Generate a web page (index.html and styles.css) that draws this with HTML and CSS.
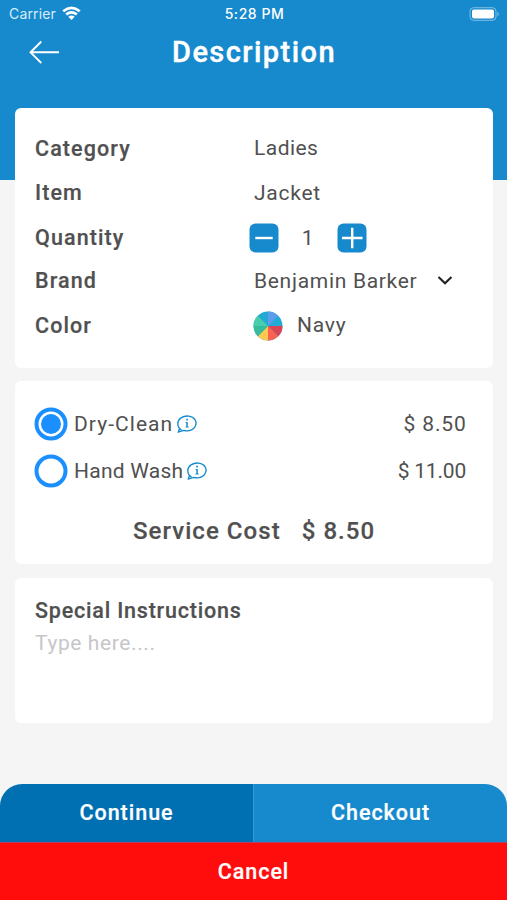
FILE: index.html
```html
<!DOCTYPE html>
<html lang="en">
<head>
<meta charset="utf-8">
<title>Description</title>
<link rel="stylesheet" href="styles.css">
</head>
<body>
<main class="screen">
  <header class="status">
    <div class="carrier"><span>Carrier</span>
      <svg width="19" height="14" viewBox="0 0 19 14"><g fill="none" stroke="#fff" stroke-width="2.7"><path d="M1.2 5.2Q9.5-1.5 17.8 5.2"/><path d="M4.2 8.5Q9.5 4.2 14.8 8.5"/></g><path d="M6.3 10.8Q9.5 8.3 12.7 10.8L9.5 14Z" fill="#fff"/></svg>
    </div>
    <time>5:28 PM</time>
    <svg class="battery" width="31" height="14" viewBox="0 0 31 14"><rect x="1" y=".7" width="26" height="12.6" rx="3.5" fill="none" stroke="#fff" stroke-opacity=".45"/><rect x="3" y="2.6" width="22" height="8.8" rx="1.8" fill="#fff"/><path d="M28.5 4.7Q31 7 28.5 9.3Z" fill="#fff" opacity=".5"/></svg>
  </header>
  <nav class="nav">
    <svg class="back" width="32" height="24" viewBox="0 0 32 24" fill="none" stroke="#fff" stroke-width="1.9"><path d="M30 12.3H1.5M12.3 1.5 1.5 12.3 12.3 23"/></svg>
    <h1>Description</h1>
  </nav>
  <section class="card details">
    <div class="row"><b class="category">Category</b><span class="ladies">Ladies</span></div>
    <div class="row"><b class="item">Item</b><span class="jacket">Jacket</span></div>
    <div class="row quantity-row"><b class="quantity">Quantity</b>
      <div class="stepper">
        <svg width="30" height="30" viewBox="0 0 30 30"><rect x=".5" y=".5" width="29" height="29" rx="6" fill="#178acd"/><path d="M6.3 15H23.7" stroke="#fff" stroke-width="2.4"/></svg>
        <span class="count">1</span>
        <svg width="30" height="30" viewBox="0 0 30 30"><rect x=".5" y=".5" width="29" height="29" rx="6" fill="#178acd"/><path d="M5 15H25.5M15.2 4.7V25.3" stroke="#fff" stroke-width="2.4"/></svg>
      </div>
    </div>
    <div class="row brand-row"><b class="brand">Brand</b><span class="barker">Benjamin Barker</span>
      <svg class="chevron" width="16" height="11" viewBox="0 0 16 11" fill="none" stroke="#222" stroke-width="2.1"><path d="m1.5 2 6.5 6.3L14.5 2"/></svg>
    </div>
    <div class="row color-row"><b class="color">Color</b>
      <svg class="wheel" width="30" height="30" viewBox="-15 -15 30 30"><circle r="14.5" fill="#23aad4"/><path fill="#5d9cec" d="M0 0V-14.5A14.5 14.5 0 0 1 10.25-10.25Z"/><path fill="#da4453" d="M0 0H14.5A14.5 14.5 0 0 1 10.25 10.25Z"/><path fill="#fc6152" d="M0 0 10.25 10.25A14.5 14.5 0 0 1 0 14.5Z"/><path fill="#fdc84f" d="M0 0V14.5A14.5 14.5 0 0 1-10.25 10.25Z"/><path fill="#37bb9b" d="M0 0-10.25 10.25A14.5 14.5 0 0 1-14.5 0Z"/><path fill="#46ceac" d="M0 0H-14.5A14.5 14.5 0 0 1-10.25-10.25Z"/></svg>
      <span class="navy">Navy</span>
    </div>
  </section>
  <section class="card services">
    <div class="service">
      <svg width="34" height="34" viewBox="0 0 34 34"><circle cx="17" cy="17" r="14.5" fill="#fff" stroke="#1c8fff" stroke-width="4"/><circle cx="17" cy="17" r="10" fill="#1c8fff"/></svg>
      <span class="dry">Dry-Clean</span>
      <svg class="info" width="20" height="18" viewBox="0 0 20 18"><path d="M4.5 15.1C-.8 11.5.1 5.6 4 2.9 8.5-.1 15.3.4 18 4.6c3 5-1 11.3-8 11.3-1.2 0-2.3-.2-3.2-.5L1.4 17l1-3.4" fill="none" stroke="#178acd" stroke-width="1.35"/><path d="M9.2 3.8h1.7v1.7H9.2zM8.6 7h2.2v4.6h.9v.9H8.5v-.9h.8V8h-.7z" fill="#178acd"/></svg>
      <span class="price eight">$ 8.50</span>
    </div>
    <div class="service">
      <svg width="34" height="34" viewBox="0 0 34 34"><circle cx="17" cy="17" r="14.5" fill="#fff" stroke="#1c8fff" stroke-width="4"/></svg>
      <span class="wash">Hand Wash</span>
      <svg class="info" width="20" height="18" viewBox="0 0 20 18"><path d="M4.5 15.1C-.8 11.5.1 5.6 4 2.9 8.5-.1 15.3.4 18 4.6c3 5-1 11.3-8 11.3-1.2 0-2.3-.2-3.2-.5L1.4 17l1-3.4" fill="none" stroke="#178acd" stroke-width="1.35"/><path d="M9.2 3.8h1.7v1.7H9.2zM8.6 7h2.2v4.6h.9v.9H8.5v-.9h.8V8h-.7z" fill="#178acd"/></svg>
      <span class="price eleven">$ 11.00</span>
    </div>
    <div class="total"><span class="cost">Service Cost</span><span class="sum">$ 8.50</span></div>
  </section>
  <section class="card notes">
    <h2>Special Instructions</h2>
    <p>Type here....</p>
  </section>
  <footer>
    <div class="actions"><div class="continue">Continue</div><div class="checkout">Checkout</div></div>
    <div class="cancel">Cancel</div>
  </footer>
</main>
</body>
</html>
```
FILE: styles.css
```css
* { box-sizing: border-box; }
body { margin: 0; font-family: Roboto, sans-serif; color: #505050; }
svg { display: block; flex: none; }
.screen { width: 507px; height: 900px; display: flex; flex-direction: column; background: linear-gradient(#178acd 180px, #f5f5f5 180px); overflow: hidden; }
.status { height: 28px; display: grid; grid-template-columns: 1fr auto 1fr; align-items: center; padding: 0 7px 0 9px; color: #fff; font-family: Inter, sans-serif; font-size: 14px; }
.carrier { display: flex; gap: 6px; align-items: center; color: #d8edfa; }
.carrier span { letter-spacing: .15px; margin-top: -1px; }
.carrier svg { margin-top: -2px; }
.status time { font-weight: 500; font-size: 14px; letter-spacing: .55px; margin-top: -1px; }
.battery { justify-self: end; margin-top: -1px; }
.nav { height: 80px; display: flex; padding-left: 29px; color: #fff; }
.back { margin-top: 12px; }
h1 { margin: 5px 0 0 111px; font-size: 29px; line-height: 38px; font-weight: 500; letter-spacing: 1.45px; -webkit-text-stroke: .4px; }
.card { margin: 0 14px 0 15px; background: #fff; border-radius: 6px; flex: none; }
.details { height: 260px; padding: 18px 20px; font-size: 21px; }
.row { display: grid; grid-template-columns: 219px 1fr; height: 44.5px; align-items: center; white-space: nowrap; }
.row b { font-size: 21.5px; font-weight: 500; letter-spacing: 1.1px; -webkit-text-stroke: .2px; }
.row span { letter-spacing: .45px; }
.row .jacket { letter-spacing: .75px; }
.row .barker { letter-spacing: .7px; }
.stepper { display: flex; align-items: center; margin-left: -5px; padding-top: 2px; }
.count { width: 58px; text-align: center; }
.brand-row { grid-template-columns: 219px 183px 1fr; height: 42px; }
.color-row { grid-template-columns: 218px 44px 1fr; height: 48px; }
.row .navy { margin-top: -2px; letter-spacing: .8px; }
.services { height: 183px; margin-top: 13px; padding: 20px 27px 0 20px; font-size: 21px; }
.service { display: flex; align-items: center; height: 46.5px; white-space: nowrap; }
.service > svg:first-child { margin-left: -1px; }
.service span:not(.price) { margin: 0 4px 0 6px; letter-spacing: .25px; }
.service span.dry { letter-spacing: 1.05px; }
.price { margin-left: auto; }
.eight { letter-spacing: .85px; margin-right: -.6px; }
.eleven { letter-spacing: -.2px; }
.total { display: flex; margin: 21px 0 0 98px; font-size: 24px; line-height: 32px; font-weight: 500; letter-spacing: 1.05px; gap: 21px; white-space: nowrap; -webkit-text-stroke: .2px; }
.notes { height: 145px; margin-top: 14px; padding: 20px; }
h2 { margin: 0; font-size: 21.5px; line-height: 26px; font-weight: 500; letter-spacing: .8px; -webkit-text-stroke: .2px; }
.notes p { margin: 6px 0 0; font-size: 21px; line-height: 26px; color: #c6c6ca; letter-spacing: .6px; }
footer { margin-top: auto; height: 116px; color: #fff; font-size: 21.5px; font-weight: 500; letter-spacing: .98px; text-align: center; -webkit-text-stroke: .2px; }
.actions { display: grid; grid-template-columns: 253px 254px; height: 58px; line-height: 58px; border-radius: 22px 22px 0 0; overflow: hidden; }
.continue { background: #0070b2; }
.checkout { background: #178acd; border-left: 1px solid #3299d4; }
.cancel { height: 58px; line-height: 57px; background: #ff0d0d; border-top: 1px solid #b6405f; }
```
